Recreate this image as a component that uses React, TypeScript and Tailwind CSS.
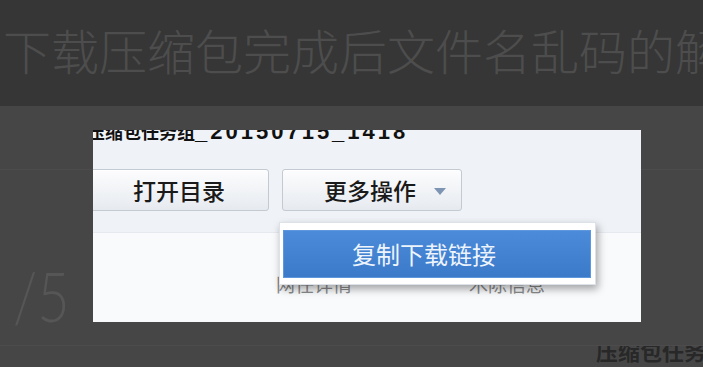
import React from 'react';

const cjk = { fontFamily: '"Noto Sans CJK SC", "Liberation Sans", sans-serif' };

function ToolButton({ label, arrow, className }: { label: string; arrow?: boolean; className?: string }) {
  return (
    <div
      className={`h-[42px] w-[180px] shrink-0 rounded-[3px] border border-[#c3cad2] bg-gradient-to-b from-[#fdfdfe] to-[#e6eaef] shadow-[inset_0_1px_0_#ffffff] flex items-center justify-center gap-[18px] text-[23px] font-medium text-[#1a1a1a] ${className ?? ''}`}
    >
      <span className="leading-none">{label}</span>
      {arrow && (
        <svg width="12" height="7" viewBox="0 0 12 7" className="mt-[2px]">
          <path d="M0 0 H12 L6 7 Z" fill="#7d95b3" />
        </svg>
      )}
    </div>
  );
}

export default function App() {
  return (
    <div className="relative w-[703px] h-[367px] overflow-hidden bg-[#464646]" style={cjk}>
      {/* page header behind the overlay */}
      <div className="h-[106px] bg-[#363636] overflow-hidden pt-[24px] pl-[3px]">
        <div className="whitespace-nowrap text-[48px] leading-[50px] font-light text-[#4d4d4d]">
          下载压缩包完成后文件名乱码的解决方法
        </div>
      </div>
      <div className="h-[64px] border-b border-[#4c4c4c]" />
      <div className="h-[176px] border-b border-[#4c4c4c] pl-[13px] pt-[100px]">
        <span
          className="inline-block origin-left scale-x-[0.82] text-[68px] leading-[52px] font-light text-[#565656]"
          style={{ fontFamily: 'Lato, "Liberation Sans", sans-serif' }}
        >
          /5
        </span>
      </div>
      <div className="h-[20px] overflow-hidden pl-[596px]">
        <div className="-mt-[8px] whitespace-nowrap text-[22px] font-bold text-[#282828] leading-[24px]">
          压缩包任务组_20150715
        </div>
      </div>

      {/* lightbox image */}
      <div className="absolute left-[93px] top-[130px] w-[548px] h-[192px] overflow-hidden bg-[#f9fafc]">
        <div className="h-[103px] flex flex-col bg-[#eff2f6] border-b border-[#e6eaee]">
          <div className="-mt-[9px] -ml-[6px] h-[20px] whitespace-nowrap text-[18px] leading-[20px] font-bold text-[#111]">
            压缩包任务组
            <span className="tracking-[3px] text-[22px]" style={{ fontFamily: '"Liberation Sans", sans-serif' }}>
              _20150715_1418
            </span>
          </div>
          <div className="mt-[28px] -ml-[4px] flex gap-[13px]">
            <ToolButton label="打开目录" />
            <ToolButton label="更多操作" arrow className="pl-[26px]" />
          </div>
        </div>
        <div className="flex mt-[40px] text-[19px] leading-[22px] text-[#8a8a8a] whitespace-nowrap">
          <span className="ml-[183px]">网任详情</span>
          <span className="ml-[117px]">木陈信息</span>
        </div>

        {/* dropdown menu */}
        <div className="absolute left-[186px] top-[92px] w-[317px] h-[63px] bg-white border border-[#dde2e8] shadow-[2px_4px_8px_rgba(0,0,0,0.35)] pl-[3px] pt-[7px]">
          <div className="w-[308px] h-[48px] bg-gradient-to-b from-[#4b8bda] to-[#3b7ac9] border border-[#5f97dd] flex items-center justify-center pr-[26px] text-[24px] text-[#eef4fc]">
            复制下载链接
          </div>
        </div>
      </div>
    </div>
  );
}
